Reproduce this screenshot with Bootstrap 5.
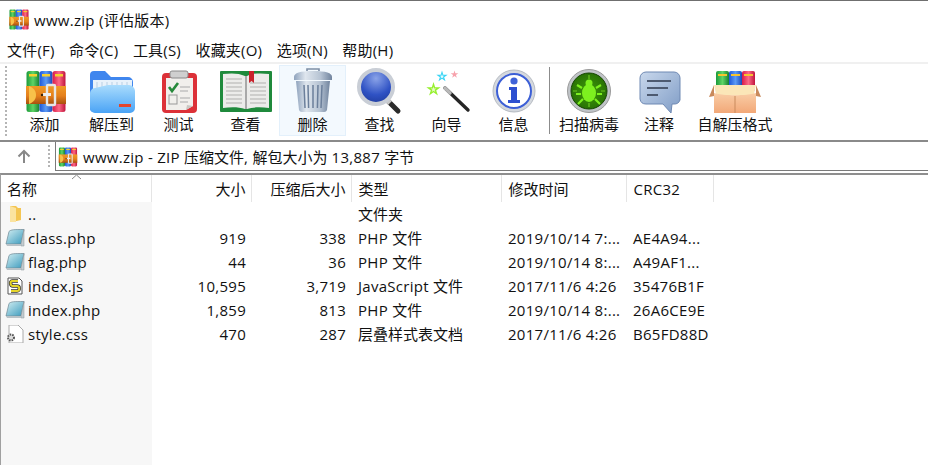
<!DOCTYPE html>
<html lang="zh">
<head>
<meta charset="utf-8">
<title>www.zip</title>
<link href="https://cdn.jsdelivr.net/npm/bootstrap@5.3.0/dist/css/bootstrap.min.css" rel="stylesheet">
<style>
html,body{height:100%;}
body{background:#fff;color:#111;font-family:"Open Sans","Noto Sans CJK SC",sans-serif;font-size:15px;line-height:20px;overflow:hidden;}
.latin-text{letter-spacing:.28px;}
.app-frame{height:465px;border-top:1px solid #6f6f6f;}
.title-row{height:37px;padding-left:9px;gap:5px;}
.menu-row{height:24px;padding-left:7px;gap:14.5px;letter-spacing:.2px;}
.tool-row{height:80px;border-top:2px solid #f0f0f0;border-bottom:2px solid #8a8a8a;padding-left:5px;}
.grip{width:3px;align-self:stretch;margin:2px 3px 2px 0;background-image:linear-gradient(#b5b5b5 50%,transparent 50%);background-size:2px 4px;background-repeat:repeat-y;}
.tool-btn{width:67px;height:71px;margin-top:1px;border:1px solid transparent;padding-top:1px;}
.tool-btn.is-hover{background:#f3f9fe;border-color:#e3f0fb;}
.tool-btn svg{display:block;}
.tool-btn span{line-height:20px;margin-top:-1px;white-space:nowrap;}
.tool-btn.w-scan{width:74px;}
.tool-btn.w-note{width:66px;}
.tool-btn.w-sfx{width:86px;}
.tool-sep{width:1px;height:67px;background:#8c8c8c;margin:3px 2px 0 2px;}
.addr-row{height:29px;}
.up-cell{width:48px;}
.addr-box{height:29px;margin-left:4px;border-left:1px solid #7a7a7a;border-bottom:1px solid #7a7a7a;padding:1px 0 0 2px;gap:5px;}
.addr-row .grip{height:24px;align-self:center;margin:0;}
.file-pane{border-top:2px solid #8e8e8e;margin-top:2px;border-left:1px solid #a0a0a0;background:linear-gradient(to right,#f7f7f7 151px,#fff 151px);}
.file-table{width:712px;table-layout:fixed;border-collapse:collapse;}
.file-table th{font-weight:400;height:27px;padding:0 5px 0 7px;background:#fff;border-right:1px solid #e5e5e5;white-space:nowrap;position:relative;}
.file-table td{height:24px;padding:0 5px 0 7px;white-space:nowrap;overflow:hidden;}
.file-table th:first-child,.file-table td:first-child{padding-left:6px;}
.file-table .c-num{text-align:right;}
.name-wrap{gap:3px;margin-left:-2px;}
.name-wrap svg{flex:none;}
.sort-caret{position:absolute;left:70px;top:-1px;}
</style>
</head>
<body>
<svg width="0" height="0" class="position-absolute">
<defs>
<linearGradient id="gGreen" x1="0" x2="1" y1="0" y2="0"><stop offset="0" stop-color="#1c9a3a"/><stop offset=".5" stop-color="#5fd466"/><stop offset="1" stop-color="#167f30"/></linearGradient>
<linearGradient id="gBlue" x1="0" x2="1" y1="0" y2="0"><stop offset="0" stop-color="#1e56d8"/><stop offset=".5" stop-color="#5c9bf6"/><stop offset="1" stop-color="#1b49b8"/></linearGradient>
<linearGradient id="gRed" x1="0" x2="1" y1="0" y2="0"><stop offset="0" stop-color="#d91a48"/><stop offset=".5" stop-color="#fb6a86"/><stop offset="1" stop-color="#c0143c"/></linearGradient>
<linearGradient id="gBelt" x1="0" x2="0" y1="0" y2="1"><stop offset="0" stop-color="#f09a26"/><stop offset=".55" stop-color="#e5801c"/><stop offset="1" stop-color="#a9500f"/></linearGradient>
<linearGradient id="gFold" x1="0" x2="0" y1="0" y2="1"><stop offset="0" stop-color="#a9dcfd"/><stop offset="1" stop-color="#4aa3f5"/></linearGradient>
<linearGradient id="gTrash" x1="0" x2="1" y1="0" y2="0"><stop offset="0" stop-color="#8fa3bd"/><stop offset=".3" stop-color="#dfe6ee"/><stop offset=".7" stop-color="#b6c3d3"/><stop offset="1" stop-color="#71849e"/></linearGradient>
<radialGradient id="gLens" cx=".5" cy=".25" r=".8"><stop offset="0" stop-color="#8aa3e8"/><stop offset=".6" stop-color="#2f52c4"/><stop offset="1" stop-color="#1e3a9a"/></radialGradient>
<radialGradient id="gBug" cx=".5" cy=".5" r=".6"><stop offset="0" stop-color="#3d9a0a"/><stop offset="1" stop-color="#256a04"/></radialGradient>
<linearGradient id="gNote" x1="0" x2="1" y1="0" y2="1"><stop offset="0" stop-color="#c9d8ec"/><stop offset="1" stop-color="#7f9cc6"/></linearGradient>
<linearGradient id="gPhp" x1="0" x2="1" y1="0" y2="1"><stop offset="0" stop-color="#d4eff2"/><stop offset="1" stop-color="#3a9abd"/></linearGradient>
<linearGradient id="gBox" x1="0" x2="0" y1="0" y2="1"><stop offset="0" stop-color="#f9cda6"/><stop offset="1" stop-color="#f2a878"/></linearGradient>
<symbol id="rar" viewBox="0 0 40 43">
<rect x="0.500" y="1" width="13" height="41" rx="2.500" fill="url(#gGreen)"/>
<rect x="13.500" y="1" width="13" height="41" rx="2.500" fill="url(#gBlue)"/>
<rect x="26.500" y="1" width="13" height="41" rx="2.500" fill="url(#gRed)"/>
<rect x="3" y="4" width="8" height="2.500" fill="#f6d02e"/><rect x="16" y="4" width="8" height="2.500" fill="#f6d02e"/><rect x="29" y="4" width="8" height="2.500" fill="#f6d02e"/>
<rect x="0" y="16" width="40" height="18" fill="url(#gBelt)"/>
<path d="M3 16c5 2 7 5 7 9s-2 7-7 9z" fill="#f8c24a"/>
<rect x="21" y="15" width="8" height="20" rx="1" fill="none" stroke="#e6e6e6" stroke-width="2.400"/>
<rect x="17" y="23" width="8" height="3" fill="#eee"/>
<circle cx="16" cy="25" r="1.200" fill="#3a2208"/>
</symbol>
<symbol id="phpf" viewBox="0 0 20 18">
<path d="M4 2.500C6 .5 9 .5 19 .5L16 15H1z" fill="url(#gPhp)" stroke="#6f8794" stroke-width=".7"/>
<path d="M19 .5V17H16V15z" fill="#c4ccd0" stroke="#8b9499" stroke-width=".5"/>
<path d="M1 15h15v2H2z" fill="#b9c2c7"/>
</symbol>
<polygon id="star" points="0,-1 .22,-.31 .95,-.31 .36,.12 .59,.81 0,.38 -.59,.81 -.36,.12 -.95,-.31 -.22,-.31"/>
</defs>
</svg>

<div class="app-frame d-flex flex-column">
  <div class="title-row d-flex align-items-center">
    <svg width="20" height="21"><use href="#rar"/></svg>
    <span class="latin-text">www.zip (评估版本)</span>
  </div>
  <div class="menu-row d-flex align-items-center">
    <span>文件(F)</span><span>命令(C)</span><span>工具(S)</span><span>收藏夹(O)</span><span>选项(N)</span><span>帮助(H)</span>
  </div>
  <div class="tool-row d-flex align-items-start">
    <div class="grip"></div>
    <div class="tool-btn d-flex flex-column align-items-center">
      <svg width="52" height="48" viewBox="0 0 52 48"><use href="#rar" x="7" y="3" width="40" height="43"/></svg>
      <span>添加</span>
    </div>
    <div class="tool-btn d-flex flex-column align-items-center">
      <svg width="52" height="48" viewBox="0 0 52 48">
        <path d="M4 8a4 4 0 0 1 4-4h11l6 6h17a5 5 0 0 1 5 5v26a4 4 0 0 1-4 4H8a4 4 0 0 1-4-4z" fill="#3f86ee"/>
        <path d="M7 13h39v12H7z" fill="#e8f2fb"/>
        <path d="M11 15v8M16 15v8M21 15v8M26 15v8M31 15v8M36 15v8M41 15v8" stroke="#b8cfe4"/>
        <path d="M4 27c0-3 2-6 5-6l13-3h21c3 0 6 3 6 6v17a5 5 0 0 1-5 5H9a5 5 0 0 1-5-5z" fill="url(#gFold)"/>
        <rect x="33" y="37" width="12" height="3" fill="#e4452b"/>
      </svg>
      <span>解压到</span>
    </div>
    <div class="tool-btn d-flex flex-column align-items-center">
      <svg width="52" height="48" viewBox="0 0 52 48">
        <rect x="9" y="6" width="35" height="40" rx="4" fill="#dc3138"/>
        <path d="M13 11h27v28l-7 4H13z" fill="#f1efec"/>
        <path d="M33 43l7-4-6-1z" fill="#c9c6c2"/>
        <rect x="17" y="4" width="18" height="7" rx="2" fill="#cfcfcf" stroke="#8a8a8a"/>
        <path d="M16 20l3 4 6-8" fill="none" stroke="#27893b" stroke-width="2.600"/>
        <path d="M27 20h10M27 24h8M27 31h10M27 35h8" stroke="#a9a9a9" stroke-width="1.200"/>
        <rect x="16" y="28" width="8" height="9" fill="none" stroke="#999"/>
      </svg>
      <span>测试</span>
    </div>
    <div class="tool-btn d-flex flex-column align-items-center">
      <svg width="52" height="48" viewBox="0 0 52 48">
        <rect x="0" y="4" width="52" height="41" rx="1" fill="#1f8a3c"/>
        <path d="M3 7c8-1 16-1 22 2v33c-6-2-14-2-22-1z" fill="#ececea"/>
        <path d="M49 7c-8-1-16-1-22 2v33c6-2 14-2 22-1z" fill="#ececea"/>
        <path d="M6 12h16M6 16h16M6 20h16M6 24h16M6 28h16M6 32h16M6 36h16M30 16h16M30 20h16M30 24h16M30 28h16M30 32h16M30 36h16" stroke="#c4c4c2" stroke-width="1.400"/>
        <path d="M25 9h2v33h-2z" fill="#a9a9a9"/>
        <path d="M29 4h5v12l-2.500-2-2.500 2z" fill="#c8232c"/>
      </svg>
      <span>查看</span>
    </div>
    <div class="tool-btn is-hover d-flex flex-column align-items-center">
      <svg width="52" height="48" viewBox="0 0 52 48">
        <path d="M20 4V2h12v2" fill="none" stroke="#7d8ea5" stroke-width="1.600"/>
        <path d="M7 10c0-4 6-6 19-6s19 2 19 6v3H7z" fill="url(#gTrash)"/>
        <path d="M9 14h34l-3 29a3 3 0 0 1-3 2H15a3 3 0 0 1-3-2z" fill="url(#gTrash)"/>
        <path d="M17 18l1 23M26 18v23M35 18l-1 23M21 18l.6 23M31 18l-.6 23" stroke="#6b7f9b" stroke-width="1.500"/>
      </svg>
      <span>删除</span>
    </div>
    <div class="tool-btn d-flex flex-column align-items-center">
      <svg width="52" height="48" viewBox="0 0 52 48">
        <path d="M33 33l11 11" stroke="#2b2b2b" stroke-width="5" stroke-linecap="round"/>
        <path d="M31 31l5 5" stroke="#c8c8c8" stroke-width="5"/>
        <circle cx="22" cy="20" r="17" fill="url(#gLens)" stroke="#c9ced6" stroke-width="4"/>
      </svg>
      <span>查找</span>
    </div>
    <div class="tool-btn d-flex flex-column align-items-center">
      <svg width="52" height="48" viewBox="0 0 52 48">
        <path d="M24 21l23 22" stroke="#262626" stroke-width="3.400" stroke-linecap="round"/>
        <path d="M24 21l5 5" stroke="#b8b8b8" stroke-width="3.400" stroke-linecap="round"/>
        <use href="#star" transform="translate(12.500 22.500) scale(7.500)" fill="#96f02e"/>
        <use href="#star" transform="translate(12.500 22.500) scale(3)" fill="#e6fbc6"/>
        <use href="#star" transform="translate(21 9.500) scale(6)" fill="#38d4f5"/>
        <use href="#star" transform="translate(21 9.500) scale(2.500)" fill="#e4fbff"/>
        <use href="#star" transform="translate(33.500 7.500) scale(4)" fill="#f7a2ac"/>
      </svg>
      <span>向导</span>
    </div>
    <div class="tool-btn d-flex flex-column align-items-center">
      <svg width="52" height="48" viewBox="0 0 52 48">
        <circle cx="26" cy="24" r="21" fill="#d4d8de" stroke="#b6bbc2"/>
        <circle cx="26" cy="24" r="17" fill="#fff" stroke="#3c5fd6" stroke-width="2"/>
        <circle cx="26" cy="14" r="3.600" fill="#3f62d8"/>
        <path d="M21 20h8v13h3v3H20v-3h3V23h-2z" fill="#2e50d0"/>
      </svg>
      <span>信息</span>
    </div>
    <div class="tool-sep"></div>
    <div class="tool-btn w-scan d-flex flex-column align-items-center">
      <svg width="52" height="48" viewBox="0 0 52 48">
        <circle cx="26" cy="24" r="21.500" fill="#c0c4c8" stroke="#9a9a9a"/>
        <circle cx="26" cy="24" r="18" fill="url(#gBug)" stroke="#164603"/>
        <path d="M26 8v4M26 36v4M10 24h4M38 24h4" stroke="#6bc81e" stroke-width="1.200"/>
        <ellipse cx="26" cy="26" rx="7" ry="9" fill="#7df01f"/>
        <circle cx="26" cy="16" r="3.500" fill="#7df01f"/>
        <path d="M19 21l-5-3M33 21l5-3M18 27h-5M34 27h5M20 32l-5 5M32 32l5 5" stroke="#7df01f" stroke-width="2.200"/>
      </svg>
      <span>扫描病毒</span>
    </div>
    <div class="tool-btn w-note d-flex flex-column align-items-center">
      <svg width="52" height="48" viewBox="0 0 52 48">
        <path d="M13 5h28a6 6 0 0 1 6 6v22a6 6 0 0 1-6 4h-2l-1 9-8-9H13a6 6 0 0 1-6-5V11a6 6 0 0 1 6-6z" fill="url(#gNote)" stroke="#6f89b3"/>
        <path d="M14 14h24M14 21h21M14 28h11" stroke="#4d5a70" stroke-width="2"/>
      </svg>
      <span>注释</span>
    </div>
    <div class="tool-btn w-sfx d-flex flex-column align-items-center">
      <svg width="52" height="48" viewBox="0 0 52 48">
        <rect x="7" y="4" width="13" height="20" rx="2" fill="url(#gGreen)"/>
        <rect x="20" y="4" width="13" height="20" rx="2" fill="url(#gBlue)"/>
        <rect x="33" y="4" width="13" height="20" rx="2" fill="url(#gRed)"/>
        <path d="M9 8h9M22 8h9M35 8h9" stroke="#f6c32e" stroke-width="2"/>
        <path d="M5 18L0 30l5-1zM47 18l5 12-5-1z" fill="#c98a5c"/>
        <path d="M5 18h42l-2 9c-10 2-28 2-38 0z" fill="#fbe6b8"/>
        <path d="M5 26c10 3 32 3 42 0v20H5z" fill="url(#gBox)"/>
        <path d="M26 29v17" stroke="#c98a5c"/>
      </svg>
      <span>自解压格式</span>
    </div>
  </div>
  <div class="addr-row d-flex align-items-center">
    <div class="up-cell d-flex align-items-center justify-content-center">
      <svg width="16" height="16" viewBox="0 0 16 16"><path d="M8 14V2M2.500 7.500L8 2l5.500 5.500" fill="none" stroke="#888" stroke-width="2"/></svg>
    </div>
    <div class="grip"></div>
    <div class="addr-box flex-grow-1 d-flex align-items-center">
      <svg width="20" height="20"><use href="#rar"/></svg>
      <span><span class="latin-text">www.zip - ZIP </span>压缩文件<span class="latin-text">, </span>解包大小为<span class="latin-text"> 13,887 </span>字节</span>
    </div>
  </div>
  <div class="file-pane flex-grow-1">
    <table class="file-table">
      <colgroup><col style="width:150px"><col style="width:100px"><col style="width:100px"><col style="width:150px"><col style="width:125px"><col style="width:87px"></colgroup>
      <thead>
        <tr>
          <th>名称<svg class="sort-caret" width="11" height="6" viewBox="0 0 11 6"><path d="M1 5l4.500-4L10 5" fill="none" stroke="#8a8a8a"/></svg></th>
          <th class="c-num">大小</th>
          <th class="c-num">压缩后大小</th>
          <th>类型</th>
          <th>修改时间</th>
          <th class="latin-text">CRC32</th>
        </tr>
      </thead>
      <tbody>
        <tr>
          <td><div class="name-wrap d-flex align-items-center"><svg width="20" height="18" viewBox="0 0 20 18"><path d="M5 1h6l2 2h3v12l-9 2H5z" fill="#f4c552"/><path d="M5 1l6 2v14l-6 0z" fill="#fbe3a0"/></svg><span class="latin-text">..</span></div></td>
          <td></td><td></td><td>文件夹</td><td></td><td></td>
        </tr>
        <tr>
          <td><div class="name-wrap d-flex align-items-center"><svg width="20" height="18"><use href="#phpf"/></svg><span class="latin-text">class.php</span></div></td>
          <td class="c-num latin-text">919</td><td class="c-num latin-text">338</td><td><span class="latin-text">PHP </span>文件</td><td class="latin-text">2019/10/14 7:...</td><td class="latin-text">AE4A94...</td>
        </tr>
        <tr>
          <td><div class="name-wrap d-flex align-items-center"><svg width="20" height="18"><use href="#phpf"/></svg><span class="latin-text">flag.php</span></div></td>
          <td class="c-num latin-text">44</td><td class="c-num latin-text">36</td><td><span class="latin-text">PHP </span>文件</td><td class="latin-text">2019/10/14 8:...</td><td class="latin-text">A49AF1...</td>
        </tr>
        <tr>
          <td><div class="name-wrap d-flex align-items-center"><svg width="20" height="18" viewBox="0 0 20 18"><path d="M3 1h11l3 3v13H3z" fill="#fff" stroke="#555"/><path d="M13 4H7C5 4 5 9 8 9h4c3 0 3 5 0 5H6" fill="none" stroke="#333" stroke-width="3.400"/><path d="M13 4H7C5 4 5 9 8 9h4c3 0 3 5 0 5H6" fill="none" stroke="#e6d52a" stroke-width="2"/></svg><span class="latin-text">index.js</span></div></td>
          <td class="c-num latin-text">10,595</td><td class="c-num latin-text">3,719</td><td><span class="latin-text">JavaScript </span>文件</td><td class="latin-text">2017/11/6 4:26</td><td class="latin-text">35476B1F</td>
        </tr>
        <tr>
          <td><div class="name-wrap d-flex align-items-center"><svg width="20" height="18"><use href="#phpf"/></svg><span class="latin-text">index.php</span></div></td>
          <td class="c-num latin-text">1,859</td><td class="c-num latin-text">813</td><td><span class="latin-text">PHP </span>文件</td><td class="latin-text">2019/10/14 8:...</td><td class="latin-text">26A6CE9E</td>
        </tr>
        <tr>
          <td><div class="name-wrap d-flex align-items-center"><svg width="20" height="18" viewBox="0 0 20 18"><path d="M4 0h9l5 5v13H4z" fill="#fff" stroke="#aaa"/><circle cx="6" cy="12.500" r="3" fill="#ddd" stroke="#555" stroke-width="2" stroke-dasharray="1.500 1"/></svg><span class="latin-text">style.css</span></div></td>
          <td class="c-num latin-text">470</td><td class="c-num latin-text">287</td><td>层叠样式表文档</td><td class="latin-text">2017/11/6 4:26</td><td class="latin-text">B65FD88D</td>
        </tr>
      </tbody>
    </table>
  </div>
</div>
</body>
</html>
